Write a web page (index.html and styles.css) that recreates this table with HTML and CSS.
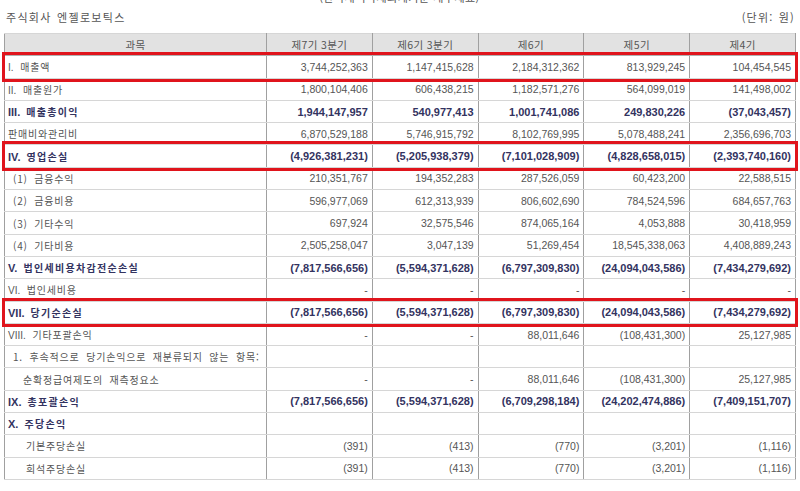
FILE: index.html
```html
<!DOCTYPE html>
<html lang="ko">
<head>
<meta charset="utf-8">
<link rel="stylesheet" href="styles.css">
</head>
<body>
<div class="page">
  <div class="cut-title">(한국채택국제회계기준 재무제표)</div>
  <div class="meta">
    <span class="company">주식회사 엔젤로보틱스</span>
    <span class="unit">(단위: 원)</span>
  </div>
  <table class="fs">
    <colgroup>
      <col class="c-label"><col class="c-num"><col class="c-num"><col class="c-num"><col class="c-num"><col class="c-num">
    </colgroup>
    <thead>
      <tr><th>과목</th><th>제7기 3분기</th><th>제6기 3분기</th><th>제6기</th><th>제5기</th><th>제4기</th></tr>
    </thead>
    <tbody>
      <tr><td class="lbl"><span class="hl"></span><span class="rn">I.</span> 매출액</td><td>3,744,252,363</td><td>1,147,415,628</td><td>2,184,312,362</td><td>813,929,245</td><td>104,454,545</td></tr>
      <tr><td class="lbl"><span class="rn">II.</span> 매출원가</td><td>1,800,104,406</td><td>606,438,215</td><td>1,182,571,276</td><td>564,099,019</td><td>141,498,002</td></tr>
      <tr class="b"><td class="lbl"><span class="rn">III.</span> 매출총이익</td><td>1,944,147,957</td><td>540,977,413</td><td>1,001,741,086</td><td>249,830,226</td><td>(37,043,457)</td></tr>
      <tr><td class="lbl">판매비와관리비</td><td>6,870,529,188</td><td>5,746,915,792</td><td>8,102,769,995</td><td>5,078,488,241</td><td>2,356,696,703</td></tr>
      <tr class="b"><td class="lbl"><span class="hl"></span><span class="rn">IV.</span> 영업손실</td><td>(4,926,381,231)</td><td>(5,205,938,379)</td><td>(7,101,028,909)</td><td>(4,828,658,015)</td><td>(2,393,740,160)</td></tr>
      <tr><td class="lbl i1">(1) 금융수익</td><td>210,351,767</td><td>194,352,283</td><td>287,526,059</td><td>60,423,200</td><td>22,588,515</td></tr>
      <tr><td class="lbl i1">(2) 금융비용</td><td>596,977,069</td><td>612,313,939</td><td>806,602,690</td><td>784,524,596</td><td>684,657,763</td></tr>
      <tr><td class="lbl i1">(3) 기타수익</td><td>697,924</td><td>32,575,546</td><td>874,065,164</td><td>4,053,888</td><td>30,418,959</td></tr>
      <tr><td class="lbl i1">(4) 기타비용</td><td>2,505,258,047</td><td>3,047,139</td><td>51,269,454</td><td>18,545,338,063</td><td>4,408,889,243</td></tr>
      <tr class="b"><td class="lbl"><span class="rn">V.</span> 법인세비용차감전순손실</td><td>(7,817,566,656)</td><td>(5,594,371,628)</td><td>(6,797,309,830)</td><td>(24,094,043,586)</td><td>(7,434,279,692)</td></tr>
      <tr><td class="lbl"><span class="rn">VI.</span> 법인세비용</td><td>-</td><td>-</td><td>-</td><td>-</td><td>-</td></tr>
      <tr class="b"><td class="lbl"><span class="hl"></span><span class="rn">VII.</span> 당기순손실</td><td>(7,817,566,656)</td><td>(5,594,371,628)</td><td>(6,797,309,830)</td><td>(24,094,043,586)</td><td>(7,434,279,692)</td></tr>
      <tr><td class="lbl"><span class="rn">VIII.</span> 기타포괄손익</td><td>-</td><td>-</td><td>88,011,646</td><td>(108,431,300)</td><td>25,127,985</td></tr>
      <tr><td class="lbl i1">1. 후속적으로 당기손익으로 재분류되지 않는 항목:</td><td></td><td></td><td></td><td></td><td></td></tr>
      <tr><td class="lbl i2">순확정급여제도의 재측정요소</td><td>-</td><td>-</td><td>88,011,646</td><td>(108,431,300)</td><td>25,127,985</td></tr>
      <tr class="b"><td class="lbl"><span class="rn">IX.</span> 총포괄손익</td><td>(7,817,566,656)</td><td>(5,594,371,628)</td><td>(6,709,298,184)</td><td>(24,202,474,886)</td><td>(7,409,151,707)</td></tr>
      <tr class="b"><td class="lbl"><span class="rn">X.</span> 주당손익</td><td></td><td></td><td></td><td></td><td></td></tr>
      <tr><td class="lbl i3">기본주당손실</td><td>(391)</td><td>(413)</td><td>(770)</td><td>(3,201)</td><td>(1,116)</td></tr>
      <tr><td class="lbl i3">희석주당손실</td><td>(391)</td><td>(413)</td><td>(770)</td><td>(3,201)</td><td>(1,116)</td></tr>
    </tbody>
  </table>
</div>
</body>
</html>
```

FILE: styles.css
```css
html, body {
  margin: 0;
  padding: 0;
  background: #ffffff;
}

.page {
  padding: 0 5px 0 4px;
  font-family: "Noto Sans CJK KR", "Liberation Sans", sans-serif;
  color: #555555;
  overflow: hidden;
  height: 491px;
  box-sizing: border-box;
}

.cut-title {
  text-align: center;
  font-size: 11px;
  line-height: 14px;
  margin-top: -10px;
  height: 14px;
  color: #555;
  letter-spacing: 0.5px;
}

.meta {
  display: flex;
  justify-content: space-between;
  align-items: center;
  height: 20px;
  margin: 3px 0 0 0;
  padding: 0 0 0 2px;
  font-size: 11px;
  color: #555;
}

.company {
  letter-spacing: 1.3px;
  word-spacing: 1px;
}

.unit {
  letter-spacing: 1.2px;
  word-spacing: 1px;
}

table.fs {
  margin-top: 6px;
  width: 791px;
  border-collapse: collapse;
  table-layout: fixed;
  border-top: 1px solid #555;
  border-left: 1px solid #555;
  border-right: 1px solid #777;
  border-bottom: 1px solid #555;
}

col.c-label { width: 262px; }
col.c-num { width: 105.8px; }

th, td {
  height: 22.3px;
  padding: 0;
  box-sizing: border-box;
  border-left: 1px solid #a0a0a0;
  border-right: 1px solid #a0a0a0;
  border-top: 1px solid #d6d6d6;
  border-bottom: 1px solid #d6d6d6;
  white-space: nowrap;
}

th {
  background: #e2e2e2;
  font-weight: normal;
  font-size: 10.5px;
  color: #555;
  text-align: center;
  border-bottom: 1px solid #b0b0b0;
  letter-spacing: 0.4px;
}

td {
  text-align: right;
  padding-right: 4px;
  font-family: "Liberation Sans", "Noto Sans CJK KR", sans-serif;
  font-size: 10.5px;
  color: #555;
}

td.lbl {
  position: relative;
  text-align: left;
  padding-left: 3px;
  padding-right: 0;
  font-family: "Noto Sans CJK KR", "Liberation Sans", sans-serif;
  font-size: 10px;
  letter-spacing: 0.8px;
  word-spacing: 3px;
}

td.i1 { padding-left: 8px; }
td.i2 { padding-left: 18px; }
td.i3 { padding-left: 21px; }

.rn {
  font-family: "Liberation Sans", sans-serif;
  letter-spacing: 0;
}

tr.b td {
  font-weight: bold;
  color: #33335f;
  font-size: 11px;
}

tr.b td.lbl {
  font-size: 10px;
  letter-spacing: 1.3px;
  word-spacing: 2px;
}

tr.b .rn {
  font-size: 11px;
  letter-spacing: 0;
}

.hl {
  position: absolute;
  left: -3px;
  top: -4px;
  bottom: -4px;
  width: 790px;
  border: 3px solid #e0141c;
  pointer-events: none;
}
```
